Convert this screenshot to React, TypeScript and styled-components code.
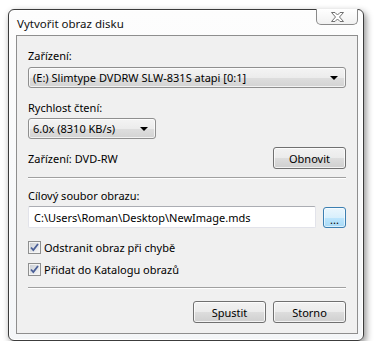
import React from "react";
import styled, { createGlobalStyle } from "styled-components";

const Global = createGlobalStyle`
  body {
    margin: 0;
    background: #ffffff;
    font-family: "Noto Sans", "Liberation Sans", sans-serif;
    font-size: 11px;
    color: #000;
  }
`;

const Window = styled.div`
  box-sizing: border-box;
  margin: 9px 0 0 8px;
  width: 356px;
  height: 332px;
  border: 1px solid #3c3c3c;
  border-radius: 6px;
  background: linear-gradient(#fdfdfd, #f4f6f8);
  box-shadow: 2px 3px 7px rgba(0, 0, 0, 0.45), inset 0 0 0 1px #ffffff;
  padding: 0 5px 6px 7px;
  display: flex;
  flex-direction: column;
`;

const TitleBar = styled.div`
  height: 25px;
  flex: none;
  display: flex;
  align-items: flex-start;
  justify-content: space-between;
`;

const Title = styled.div`
  padding: 6px 0 0 1px;
  font-size: 11.5px;
  color: #111;
`;

const CloseButton = styled.div`
  box-sizing: border-box;
  width: 42px;
  height: 16px;
  margin-top: -1px;
  border: 1px solid #8a8a8a;
  border-top: none;
  border-radius: 0 0 5px 5px;
  background: linear-gradient(#ffffff, #f1f1f1);
  display: flex;
  align-items: center;
  justify-content: center;
`;

const Client = styled.div`
  flex: 1;
  min-height: 0;
  border: 1px solid #8e8e8e;
  background: #f0f0f0;
  padding: 12px 11px 10px 11px;
  display: flex;
  flex-direction: column;
`;

const Label = styled.div<{ $top?: number }>`
  margin-top: ${(p) => p.$top ?? 0}px;
  height: 15px;
  line-height: 15px;
  white-space: nowrap;
`;

const Combo = styled.div<{ $width: string; $top: number }>`
  box-sizing: border-box;
  margin-top: ${(p) => p.$top}px;
  width: ${(p) => p.$width};
  height: 21px;
  border: 1px solid #8f8f8f;
  border-radius: 3px;
  background: linear-gradient(#f4f4f4 0%, #ececec 50%, #dedede 51%, #d3d3d3 100%);
  box-shadow: inset 0 0 0 1px rgba(255, 255, 255, 0.7);
  display: flex;
  align-items: center;
  justify-content: space-between;
  padding: 0 7px 0 4px;
  white-space: nowrap;
`;

const Arrow = styled.span`
  width: 0;
  height: 0;
  border-left: 4px solid transparent;
  border-right: 4px solid transparent;
  border-top: 4px solid #000;
  margin-top: 1px;
`;

const Row = styled.div<{ $top: number }>`
  margin-top: ${(p) => p.$top}px;
  height: 22px;
  display: flex;
  align-items: center;
  justify-content: space-between;
  gap: 7px;
`;

const Button = styled.div<{ $width?: number }>`
  box-sizing: border-box;
  width: ${(p) => p.$width ?? 73}px;
  height: 22px;
  border: 1px solid #707070;
  border-radius: 3px;
  background: linear-gradient(#f2f2f2 0%, #ebebeb 50%, #dddddd 51%, #cfcfcf 100%);
  box-shadow: inset 0 0 0 1px rgba(255, 255, 255, 0.75);
  display: flex;
  align-items: center;
  justify-content: center;
`;

const BrowseButton = styled(Button)`
  width: 23px;
  height: 21px;
  border-color: #3c7fb1;
  background: linear-gradient(#eaf6fd 0%, #d9f0fc 50%, #bee6fd 51%, #a7d9f5 100%);
  box-shadow: inset 0 0 0 1px rgba(255, 255, 255, 0.6);
  font-size: 11px;
  line-height: 1;
  padding-top: 4px;
`;

const TextBox = styled.div`
  box-sizing: border-box;
  flex: 1;
  height: 22px;
  border: 1px solid #e2e3ea;
  border-top-color: #abadb3;
  border-radius: 2px;
  background: #ffffff;
  display: flex;
  align-items: center;
  padding: 0 5px;
  white-space: nowrap;
`;

const Separator = styled.div<{ $top: number }>`
  margin-top: ${(p) => p.$top}px;
  height: 0;
  border-top: 1px solid #a0a0a0;
  border-bottom: 1px solid #ffffff;
`;

const CheckRow = styled.label<{ $top: number }>`
  margin-top: ${(p) => p.$top}px;
  display: flex;
  align-items: center;
  gap: 3px;
  height: 15px;
`;

const Buttons = styled.div<{ $top: number }>`
  margin-top: ${(p) => p.$top}px;
  display: flex;
  justify-content: flex-end;
  gap: 7px;
`;

const CloseGlyph = () => (
  <svg width="15" height="10" viewBox="0 0 15 10">
    <path
      d="M1.5 0.5 H5 L7.5 3 L10 0.5 H13.5 L9.5 5 L13.5 9.5 H10 L7.5 7 L5 9.5 H1.5 L5.5 5 Z"
      fill="#ffffff"
      stroke="#707070"
      strokeWidth="1"
      strokeLinejoin="round"
    />
  </svg>
);

const CheckBox = () => (
  <svg width="13" height="13" viewBox="0 0 13 13">
    <defs>
      <linearGradient id="cbg" x1="0" y1="0" x2="1" y2="1">
        <stop offset="0" stopColor="#cbcfd5" />
        <stop offset="1" stopColor="#f6f6f6" />
      </linearGradient>
    </defs>
    <rect x="0.5" y="0.5" width="12" height="12" fill="#f4f4f4" stroke="#8e8f8f" />
    <rect x="2" y="2" width="9" height="9" fill="url(#cbg)" />
    <path d="M3 6.5 L5.3 9 L10 3" fill="none" stroke="#4a5f97" strokeWidth="1.8" />
  </svg>
);

export default function App() {
  return (
    <>
      <Global />
      <Window>
        <TitleBar>
          <Title>Vytvořit obraz disku</Title>
          <CloseButton>
            <CloseGlyph />
          </CloseButton>
        </TitleBar>
        <Client>
          <Label>Zařízení:</Label>
          <Combo $width="100%" $top={4}>
            <span>(E:) Slimtype DVDRW SLW-831S atapi [0:1]</span>
            <Arrow />
          </Combo>
          <Label $top={12}>Rychlost čtení:</Label>
          <Combo $width="128px" $top={3}>
            <span>6.0x (8310 KB/s)</span>
            <Arrow />
          </Combo>
          <Row $top={8}>
            <span>Zařízení: DVD-RW</span>
            <Button>Obnovit</Button>
          </Row>
          <Separator $top={8} />
          <Label $top={9}>Cílový soubor obrazu:</Label>
          <Row $top={3}>
            <TextBox>C:\Users\Roman\Desktop\NewImage.mds</TextBox>
            <BrowseButton>...</BrowseButton>
          </Row>
          <CheckRow $top={12}>
            <CheckBox />
            Odstranit obraz při chybě
          </CheckRow>
          <CheckRow $top={7}>
            <CheckBox />
            Přidat do Katalogu obrazů
          </CheckRow>
          <Separator $top={10} />
          <Buttons $top={12}>
            <Button>Spustit</Button>
            <Button>Storno</Button>
          </Buttons>
        </Client>
      </Window>
    </>
  );
}
